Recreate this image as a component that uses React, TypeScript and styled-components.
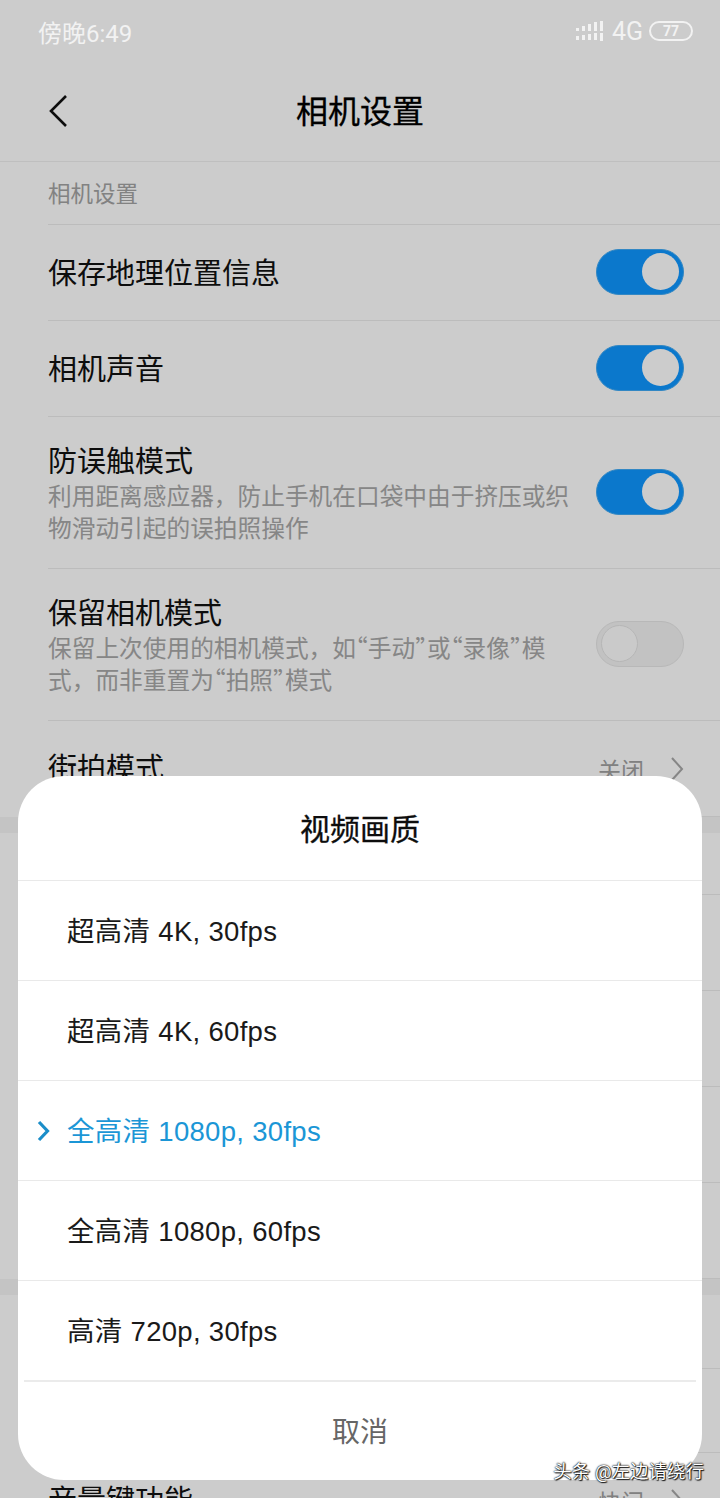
import React, { FC } from 'react';
import styled, { createGlobalStyle } from 'styled-components';

const GlobalStyle = createGlobalStyle`
  html, body {
    margin: 0;
    padding: 0;
    background: #fff;
  }
  body {
    font-family: Roboto, "Noto Sans CJK SC", sans-serif;
  }
`;

const Screen = styled.div`
  position: relative;
  width: 720px;
  height: 1498px;
  overflow: hidden;
  background: #fff;
`;

const StatusBar = styled.div`
  position: relative;
  z-index: 2;
  display: flex;
  align-items: center;
  justify-content: space-between;
  height: 62px;
  padding: 0 27px 0 38px;
  color: #f2f2f2;
`;

const StatusTime = styled.span`
  font-size: 24px;
`;

const StatusIcons = styled.div`
  display: flex;
  align-items: center;
`;

const NetworkLabel = styled.span`
  margin: 0 6px 0 9px;
  font-size: 25px;
`;

const Battery = styled.span`
  display: flex;
  align-items: center;
  justify-content: center;
  box-sizing: border-box;
  width: 44px;
  height: 20px;
  border: 2px solid #f2f2f2;
  border-radius: 10px;
  font-size: 14px;
  font-weight: 700;
  line-height: 1;
`;

const NavBar = styled.header`
  display: flex;
  align-items: center;
  justify-content: center;
  position: relative;
  box-sizing: border-box;
  height: 100px;
  padding-bottom: 6px;
  border-bottom: 1px solid #efefef;
`;

const NavTitle = styled.h1`
  margin: 0;
  color: #000;
  font-size: 32px;
  font-weight: 400;
  -webkit-text-stroke: 0.3px #000;
`;

const BackButton = styled.span`
  position: absolute;
  left: 48px;
  top: 32px;
  display: flex;
`;

const SectionLabel = styled.div<{ $height?: number }>`
  display: flex;
  align-items: center;
  box-sizing: border-box;
  height: ${(p) => p.$height ?? 62}px;
  margin-left: 48px;
  padding-bottom: 2px;
  color: #a3a3a3;
  font-size: 22.5px;
  border-bottom: 1px solid #ececec;
`;

const Row = styled.div<{ $height?: number }>`
  display: flex;
  align-items: center;
  justify-content: space-between;
  box-sizing: border-box;
  height: ${(p) => p.$height ?? 96}px;
  margin-left: 48px;
  padding-right: 36px;
  border-bottom: 1px solid #ececec;
`;

const RowText = styled.div`
  display: flex;
  flex-direction: column;
  width: 524px;
  padding-top: 2px;
`;

const RowTitle = styled.div`
  color: #111;
  font-size: 29px;
  line-height: 38px;
`;

const RowDesc = styled.div`
  margin-top: -2px;
  margin-bottom: 2px;
  color: #a8a8a8;
  font-family: "Noto Sans CJK SC", sans-serif;
  font-size: 23.7px;
  line-height: 32px;
`;

// the quotes in the reference are half width
const Quote = styled.span`
  font-feature-settings: "halt";
`;

const RowValue = styled.div`
  display: flex;
  align-items: center;
  gap: 26px;
  color: #a0a0a0;
  font-size: 23px;
`;

const Band = styled.div`
  height: 16px;
  background: #f5f5f5;
`;

const Toggle = styled.span<{ $on: boolean }>`
  display: flex;
  align-items: center;
  justify-content: ${(p) => (p.$on ? 'flex-end' : 'flex-start')};
  box-sizing: border-box;
  width: 88px;
  height: 46px;
  margin-bottom: 2px;
  padding: 0 4px;
  border-radius: 23px;
  background: ${(p) => (p.$on ? '#0e97ff' : '#f3f3f3')};
  border: 1px solid ${(p) => (p.$on ? '#3fa9f5' : '#e6e6e6')};
`;

const ToggleThumb = styled.span<{ $on: boolean }>`
  width: 37px;
  height: 37px;
  border-radius: 50%;
  background: ${(p) => (p.$on ? '#fff' : '#fdfdfd')};
  border: ${(p) => (p.$on ? '0' : '1px solid #e4e4e4')};
  box-sizing: border-box;
`;

const Scrim = styled.div`
  position: absolute;
  inset: 0;
  z-index: 1;
  background: rgba(0, 0, 0, 0.2);
`;

const Dialog = styled.div`
  position: absolute;
  z-index: 2;
  left: 18px;
  top: 776px;
  width: 684px;
  border-radius: 46px;
  background: #fff;
  overflow: hidden;
`;

const DialogTitle = styled.div`
  display: flex;
  align-items: center;
  justify-content: center;
  box-sizing: border-box;
  height: 104px;
  padding-bottom: 2px;
  color: #0d0d0d;
  font-size: 30px;
  -webkit-text-stroke: 0.3px #0d0d0d;
`;

const Option = styled.div<{ $selected?: boolean }>`
  position: relative;
  display: flex;
  align-items: center;
  box-sizing: border-box;
  height: 100px;
  padding: 0 0 3px 49px;
  border-top: 1px solid #e9e9e9;
  color: ${(p) => (p.$selected ? '#1b96d6' : '#1a1a1a')};
  font-family: "Liberation Sans", "Noto Sans CJK SC", sans-serif;
  font-size: 27.5px;
  letter-spacing: 0.3px;
`;

const OptionMark = styled.span`
  position: absolute;
  left: 19px;
  top: 39px;
  display: flex;
`;

const CancelButton = styled.div`
  display: flex;
  align-items: center;
  justify-content: center;
  height: 100px;
  margin: 0 6px;
  padding-bottom: 2px;
  border-top: 2px solid #ebebeb;
  box-sizing: border-box;
  color: #666;
  font-size: 28px;
`;

const Watermark = styled.div`
  position: absolute;
  z-index: 3;
  right: 16px;
  top: 1460px;
  color: #fff;
  font-size: 18.5px;
  line-height: 24px;
  text-shadow: 0 0 2px #000, 0 0 1px #000, 1px 1px 1px #222;
`;

const SignalIcon: FC = () => (
  <svg width="27" height="20" viewBox="0 0 27 20" fill="#f2f2f2">
    <rect x="0" y="7" width="3" height="3" />
    <rect x="6" y="5" width="3" height="5" />
    <rect x="12" y="3" width="3" height="7" />
    <rect x="18" y="1" width="3" height="9" />
    <rect x="24" y="0" width="3" height="10" />
    <rect x="0" y="15" width="3" height="4" />
    <rect x="6" y="14" width="3" height="5" />
    <rect x="12" y="13" width="3" height="6" />
    <rect x="18" y="12" width="3" height="7" />
    <rect x="24" y="12" width="3" height="8" />
  </svg>
);

const BackIcon: FC = () => (
  <svg width="20" height="34" viewBox="0 0 20 34" fill="none">
    <path d="M18 2 L3 17 L18 32" stroke="#111" strokeWidth="2.6" />
  </svg>
);

const ChevronIcon: FC = () => (
  <svg width="14" height="24" viewBox="0 0 14 24" fill="none">
    <path d="M2 1 L12 12 L2 23" stroke="#a8a8a8" strokeWidth="2" />
  </svg>
);

const SelectedIcon: FC = () => (
  <svg width="13" height="22" viewBox="0 0 13 22" fill="none">
    <path d="M2 2 L10.5 11 L2 20" stroke="#1b8ec9" strokeWidth="3.2" />
  </svg>
);

const options = [
  '超高清 4K, 30fps',
  '超高清 4K, 60fps',
  '全高清 1080p, 30fps',
  '全高清 1080p, 60fps',
  '高清 720p, 30fps',
];

const SELECTED = 2;

const App: FC = () => (
  <Screen>
    <GlobalStyle />
    <StatusBar>
      <StatusTime>傍晚6:49</StatusTime>
      <StatusIcons>
        <SignalIcon />
        <NetworkLabel>4G</NetworkLabel>
        <Battery>77</Battery>
      </StatusIcons>
    </StatusBar>
    <NavBar>
      <BackButton>
        <BackIcon />
      </BackButton>
      <NavTitle>相机设置</NavTitle>
    </NavBar>
    <SectionLabel $height={63}>相机设置</SectionLabel>
    <Row>
      <RowText>
        <RowTitle>保存地理位置信息</RowTitle>
      </RowText>
      <Toggle $on>
        <ToggleThumb $on />
      </Toggle>
    </Row>
    <Row>
      <RowText>
        <RowTitle>相机声音</RowTitle>
      </RowText>
      <Toggle $on>
        <ToggleThumb $on />
      </Toggle>
    </Row>
    <Row $height={152}>
      <RowText>
        <RowTitle>防误触模式</RowTitle>
        <RowDesc>利用距离感应器，防止手机在口袋中由于挤压或织物滑动引起的误拍照操作</RowDesc>
      </RowText>
      <Toggle $on>
        <ToggleThumb $on />
      </Toggle>
    </Row>
    <Row $height={152}>
      <RowText>
        <RowTitle>保留相机模式</RowTitle>
        <RowDesc>
          保留上次使用的相机模式，如<Quote>“</Quote>手动<Quote>”</Quote>或<Quote>“</Quote>录像
          <Quote>”</Quote>模式，而非重置为<Quote>“</Quote>拍照<Quote>”</Quote>模式
        </RowDesc>
      </RowText>
      <Toggle $on={false}>
        <ToggleThumb $on={false} />
      </Toggle>
    </Row>
    <Row>
      <RowTitle>街拍模式</RowTitle>
      <RowValue>
        关闭
        <ChevronIcon />
      </RowValue>
    </Row>
    <Band />
    <SectionLabel />
    <Row />
    <Row />
    <Row />
    <Row />
    <Band />
    <SectionLabel $height={74} />
    <Row $height={84} />
    <Row>
      <RowTitle>音量键功能</RowTitle>
      <RowValue>
        快门
        <ChevronIcon />
      </RowValue>
    </Row>
    <Scrim />
    <Dialog>
      <DialogTitle>视频画质</DialogTitle>
      {options.map((label, i) => (
        <Option key={label} $selected={i === SELECTED}>
          {i === SELECTED && (
            <OptionMark>
              <SelectedIcon />
            </OptionMark>
          )}
          {label}
        </Option>
      ))}
      <CancelButton>取消</CancelButton>
    </Dialog>
    <Watermark>头条 @左边请绕行</Watermark>
  </Screen>
);

export default App;
